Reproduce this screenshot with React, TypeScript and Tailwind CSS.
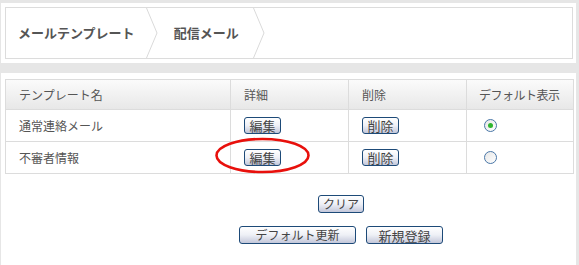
const font = { fontFamily: '"Noto Sans CJK JP", "Liberation Sans", sans-serif' };

function Chevron() {
  return (
    <svg width="12" height="50" viewBox="0 0 12 50" className="shrink-0">
      <polyline points="0.5,0 11,25 0.5,50" fill="none" stroke="#dadada" strokeWidth="1" />
    </svg>
  );
}

function Btn({ label, w }: { label: string; w: string }) {
  return (
    <button
      className={`${w} flex items-center justify-center rounded-[3px] border border-[#1d4a78] bg-gradient-to-b from-white via-[#eef0f6] to-[#c3c7da] leading-none text-[#444]`}
    >
      {label}
    </button>
  );
}

function Radio({ checked }: { checked?: boolean }) {
  return (
    <span className="ml-[17px] flex h-[13px] w-[13px] items-center justify-center rounded-full border border-[#4a77a8] bg-gradient-to-br from-[#e6e6e6] to-white">
      {checked && <span className="h-[5px] w-[5px] rounded-full bg-[#2fb52f]" />}
    </span>
  );
}

const rows = [
  { name: "通常連絡メール", checked: true },
  { name: "不審者情報", checked: false },
];

export default function App() {
  return (
    <div className="relative h-[265px] w-[579px] overflow-hidden bg-[#e6e6e6] pt-[3px] text-[#555]" style={font}>
      {/* Breadcrumb */}
      <div className="ml-[1px] h-[60px] w-[575px] bg-white pl-[4px] pt-[4px]">
        <div className="flex h-[52px] w-[568px] items-center border border-[#dcdcdc]">
          <span className="ml-[12px] text-[13px] font-bold">メールテンプレート</span>
          <span className="ml-[11px]">
            <Chevron />
          </span>
          <span className="ml-[16px] text-[13px] font-bold">配信メール</span>
          <span className="ml-[14px]">
            <Chevron />
          </span>
        </div>
      </div>

      {/* Table area */}
      <div className="ml-[1px] mt-[10px] h-[192px] w-[575px] bg-white pl-[4px] pt-[6px]">
        <table className="w-[568px] table-fixed border-collapse text-[12px]">
          <colgroup>
            <col className="w-[225px]" />
            <col className="w-[118px]" />
            <col className="w-[118px]" />
            <col className="w-[107px]" />
          </colgroup>
          <thead>
            <tr className="h-[30px] bg-gradient-to-b from-[#fbfbfb] to-[#e7e7e7]">
              <th className="border border-[#dcdcdc] pl-[13px] text-left font-normal">テンプレート名</th>
              <th className="border border-[#dcdcdc] pl-[13px] text-left font-normal">詳細</th>
              <th className="border border-[#dcdcdc] pl-[13px] text-left font-normal">削除</th>
              <th className="border border-[#dcdcdc] pl-[12px] text-left font-normal tracking-[-0.5px]">デフォルト表示</th>
            </tr>
          </thead>
          <tbody>
            {rows.map((r) => (
              <tr key={r.name} className="h-[32px]">
                <td className="border border-[#dcdcdc] pl-[13px]">{r.name}</td>
                <td className="border border-[#dcdcdc] pl-[13px]">
                  <Btn label="編集" w="w-[37px] h-[17px] text-[13px]" />
                </td>
                <td className="border border-[#dcdcdc] pl-[13px]">
                  <Btn label="削除" w="w-[37px] h-[17px] text-[13px]" />
                </td>
                <td className="border border-[#dcdcdc]">
                  <Radio checked={r.checked} />
                </td>
              </tr>
            ))}
          </tbody>
        </table>

        <div className="flex flex-col items-center pl-[101px] pt-[21px]">
          <Btn label="クリア" w="w-[46px] h-[18px] text-[12px]" />
          <div className="mt-[13px] flex gap-[10px]">
            <Btn label="デフォルト更新" w="w-[117px] h-[18px] text-[12px]" />
            <Btn label="新規登録" w="w-[77px] h-[18px] text-[13px]" />
          </div>
        </div>
      </div>

      {/* Highlight */}
      <svg className="pointer-events-none absolute left-[212px] top-[137px]" width="102" height="40" viewBox="0 0 102 40">
        <ellipse cx="50.5" cy="18.5" rx="46" ry="16.5" fill="none" stroke="#e8100c" strokeWidth="2.6" />
      </svg>
    </div>
  );
}
